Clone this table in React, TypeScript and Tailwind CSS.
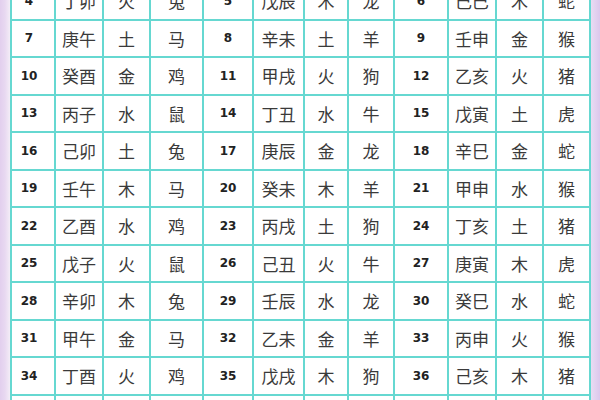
type Entry = [number, string, string, string];

const entries: Entry[] = [
  [4, "丁卯", "火", "兔"],
  [5, "戊辰", "木", "龙"],
  [6, "己巳", "木", "蛇"],
  [7, "庚午", "土", "马"],
  [8, "辛未", "土", "羊"],
  [9, "壬申", "金", "猴"],
  [10, "癸酉", "金", "鸡"],
  [11, "甲戌", "火", "狗"],
  [12, "乙亥", "火", "猪"],
  [13, "丙子", "水", "鼠"],
  [14, "丁丑", "水", "牛"],
  [15, "戊寅", "土", "虎"],
  [16, "己卯", "土", "兔"],
  [17, "庚辰", "金", "龙"],
  [18, "辛巳", "金", "蛇"],
  [19, "壬午", "木", "马"],
  [20, "癸未", "木", "羊"],
  [21, "甲申", "水", "猴"],
  [22, "乙酉", "水", "鸡"],
  [23, "丙戌", "土", "狗"],
  [24, "丁亥", "土", "猪"],
  [25, "戊子", "火", "鼠"],
  [26, "己丑", "火", "牛"],
  [27, "庚寅", "木", "虎"],
  [28, "辛卯", "木", "兔"],
  [29, "壬辰", "水", "龙"],
  [30, "癸巳", "水", "蛇"],
  [31, "甲午", "金", "马"],
  [32, "乙未", "金", "羊"],
  [33, "丙申", "火", "猴"],
  [34, "丁酉", "火", "鸡"],
  [35, "戊戌", "木", "狗"],
  [36, "己亥", "木", "猪"],
  [37, "庚子", "土", "鼠"],
  [38, "辛丑", "土", "牛"],
  [39, "壬寅", "金", "虎"],
];

const cjk = "font-['Noto_Sans_CJK_SC',sans-serif] text-[17px] text-[#3a3a3a]";

function Cell({ children, className = "" }: { children: React.ReactNode; className?: string }) {
  return (
    <div className={`bg-white flex items-center justify-center leading-none ${className}`}>
      {children}
    </div>
  );
}

export default function App() {
  return (
    <div className="w-[600px] h-[400px] overflow-hidden bg-white flex">
      <div className="w-[10px] h-full shrink-0 bg-gradient-to-r from-[#e2cfee] via-[#e8d9f1] to-[#f4edf7]" />
      <div className="shrink-0 h-full overflow-hidden">
        <div className="-mt-[19px] grid grid-cols-[42px_46px_45px_51px_48px_49px_42px_44px_52px_46px_45px_45px] auto-rows-[35.5px] gap-[2px] p-[2px] bg-[#66d8d1]">
          {entries.map(([n, gz, el, an], i) => {
            const first = i % 3 === 0;
            return [
              <Cell key={`n${n}`} className={first ? "pr-[8px]" : ""}>
                <span className="font-['DejaVu_Sans',sans-serif] font-bold text-[12px] text-[#222]">{n}</span>
              </Cell>,
              <Cell key={`g${n}`}>
                <span className={cjk}>{gz}</span>
              </Cell>,
              <Cell key={`e${n}`}>
                <span className={cjk}>{el}</span>
              </Cell>,
              <Cell key={`a${n}`}>
                <span className={cjk}>{an}</span>
              </Cell>,
            ];
          })}
        </div>
      </div>
      <div className="flex-1 h-full bg-gradient-to-r from-[#e9dcf3] to-[#dcc7ec]" />
    </div>
  );
}
